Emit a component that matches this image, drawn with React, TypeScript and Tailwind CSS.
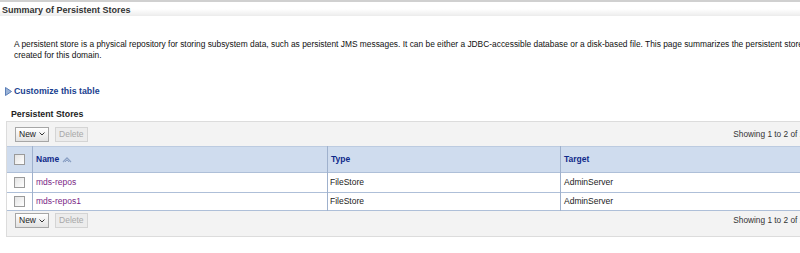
import React from 'react'

const font = { fontFamily: '"Liberation Sans", Arial, sans-serif' }

function Btn({ label, menu, disabled }: { label: string; menu?: boolean; disabled?: boolean }) {
  return (
    <button
      className={
        'h-[15px] px-[3px] border text-[8.5px] leading-[13px] flex items-center gap-[3px] ' +
        (disabled
          ? 'border-[#d4d4d4] bg-[#ececec] text-[#a8a8a8]'
          : 'border-[#a6a6a6] bg-gradient-to-b from-white to-[#e2e2e2] text-[#222]')
      }
    >
      {label}
      {menu && (
        <svg width="6" height="4" viewBox="0 0 6 4">
          <path d="M0.5 0.5 L3 3 L5.5 0.5" fill="none" stroke="#333" strokeWidth="1" />
        </svg>
      )}
    </button>
  )
}

function Check() {
  return <span className="block w-[11px] h-[11px] border border-[#9a9a9a] bg-gradient-to-br from-[#e4e4e4] to-white" />
}

function Toolbar({ bottom }: { bottom?: boolean }) {
  return (
    <div
      className={
        'h-[24px] flex pl-[8px] gap-[6px] bg-[#f3f3f3] ' + (bottom ? 'items-start pt-[2px] h-[25px]' : 'items-center')
      }
    >
      <Btn label="New" menu />
      <Btn label="Delete" disabled />
      <span className="ml-auto text-[8.3px] leading-[15px] text-[#333] whitespace-nowrap">
        Showing 1 to 2 of 2&nbsp;&nbsp;Previous | Next
      </span>
    </div>
  )
}

const rows = [
  { name: 'mds-repos', type: 'FileStore', target: 'AdminServer', h: 'h-[20px]' },
  { name: 'mds-repos1', type: 'FileStore', target: 'AdminServer', h: 'h-[18px]' },
]

export default function App() {
  return (
    <div className="w-[800px] h-[253px] overflow-hidden bg-white" style={font}>
      <div className="w-[866px]">
        <div className="border-t-2 border-[#d0d0d0] h-[16px] bg-gradient-to-b from-white via-white to-[#ececec] flex items-start">
          <span className="text-[9px] font-bold text-[#333] pl-[2px] pt-[3px] leading-[11px]">
            Summary of Persistent Stores
          </span>
        </div>

        <p className="pl-[14px] pt-[23px] text-[8.4px] leading-[11px] text-[#111] w-[950px]">
          A persistent store is a physical repository for storing subsystem data, such as persistent JMS messages. It can be either a JDBC-accessible database or a disk-based file. This page summarizes the persistent store configuration that has been
          <br />
          created for this domain.
        </p>

        <div className="pl-[5px] pt-[25px] flex items-center gap-[2px]">
          <svg width="7" height="9" viewBox="0 0 7 9">
            <path d="M0.5 0.5 L6.5 4.5 L0.5 8.5 Z" fill="#9bb3d6" stroke="#5b7fb8" strokeWidth="1" />
          </svg>
          <span className="text-[8.8px] font-bold text-[#1a3f8f] leading-[11px]">Customize this table</span>
        </div>

        <div className="pl-[11px] pt-[12px] text-[8.8px] font-bold text-[#222] leading-[11px]">Persistent Stores</div>

        <div className="ml-[6px] mt-[1px] border border-[#dcdcdc] bg-[#f3f3f3]">
          <Toolbar />
          <table className="w-full border-collapse text-[8.5px]">
            <thead>
              <tr className="bg-[#cfdcee] h-[26px] border-t border-[#bccbe0]">
                <th className="w-[25px] border-r border-[#9fb1cd] px-[7px] align-middle">
                  <Check />
                </th>
                <th className="w-[295px] border-r border-[#9fb1cd] text-left pl-[3px] font-bold text-[#0f2a8a]">
                  <span className="inline-flex items-center gap-[3px]">
                    Name
                    <svg width="10" height="6" viewBox="0 0 10 6">
                      <path d="M1 5 L5 1 L9 5" fill="none" stroke="#8aa0c4" strokeWidth="1.3" />
                      <path d="M3 5 L5 3 L7 5" fill="none" stroke="#8aa0c4" strokeWidth="1" />
                    </svg>
                  </span>
                </th>
                <th className="w-[233px] border-r border-[#9fb1cd] text-left pl-[3px] font-bold text-[#0f2a8a]">Type</th>
                <th className="text-left pl-[3px] font-bold text-[#0f2a8a]">Target</th>
              </tr>
            </thead>
            <tbody>
              {rows.map((r) => (
                <tr key={r.name} className={'bg-white border-t border-b border-[#aebfd8] ' + r.h}>
                  <td className="border-r border-[#9fb1cd] px-[7px]">
                    <Check />
                  </td>
                  <td className="border-r border-[#9fb1cd] pl-[3px] text-[#7b1f86]">{r.name}</td>
                  <td className="border-r border-[#9fb1cd] pl-[2px] text-[#222]">{r.type}</td>
                  <td className="pl-[3px] text-[#222]">{r.target}</td>
                </tr>
              ))}
            </tbody>
          </table>
          <Toolbar bottom />
        </div>
      </div>
    </div>
  )
}
